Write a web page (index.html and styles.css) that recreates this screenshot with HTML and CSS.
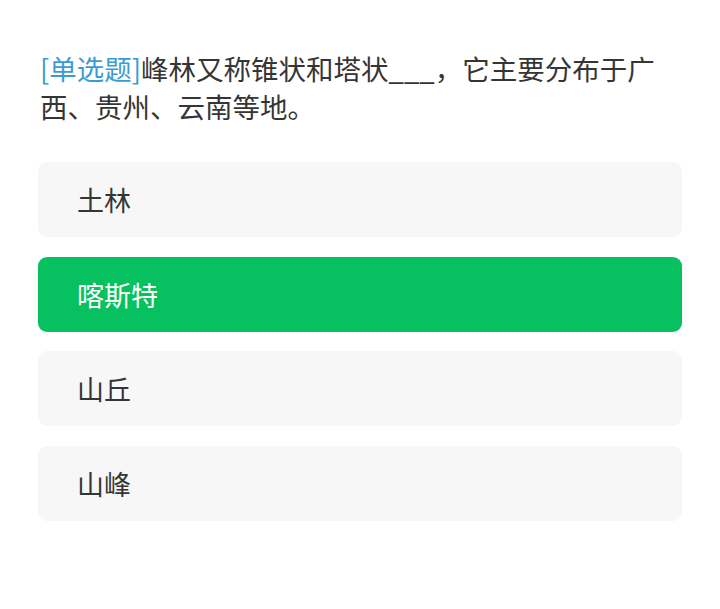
FILE: index.html
```html
<!DOCTYPE html>
<html lang="zh">
<head>
<meta charset="utf-8">
<link rel="stylesheet" href="styles.css">
</head>
<body>
<div class="page">
  <p class="question"><span class="tag">[单选题]</span>峰林又称锥状和塔状___，它主要分布于广西、贵州、云南等地。</p>
  <div class="options">
    <div class="option">土林</div>
    <div class="option selected">喀斯特</div>
    <div class="option">山丘</div>
    <div class="option">山峰</div>
  </div>
</div>
</body>
</html>
```
FILE: styles.css
```css
html, body {
  margin: 0;
  padding: 0;
  background: #ffffff;
}
.page {
  padding: 49px 38px 0 38px;
  font-family: "Noto Sans CJK SC", "Noto Sans", sans-serif;
}
.question {
  margin: 0 0 37px 0;
  padding: 0 22px 0 2px;
  font-size: 27.5px;
  line-height: 38px;
  color: #353535;
}
.tag {
  color: #3d9bd4;
}
.options {
  display: flex;
  flex-direction: column;
  gap: 19.5px;
}
.option {
  height: 75px;
  display: flex;
  align-items: center;
  padding-left: 39px;
  background: #f7f7f7;
  border-radius: 9px;
  font-size: 27px;
  color: #353535;
}
.option.selected {
  background: #07c160;
  color: #ffffff;
}
```
